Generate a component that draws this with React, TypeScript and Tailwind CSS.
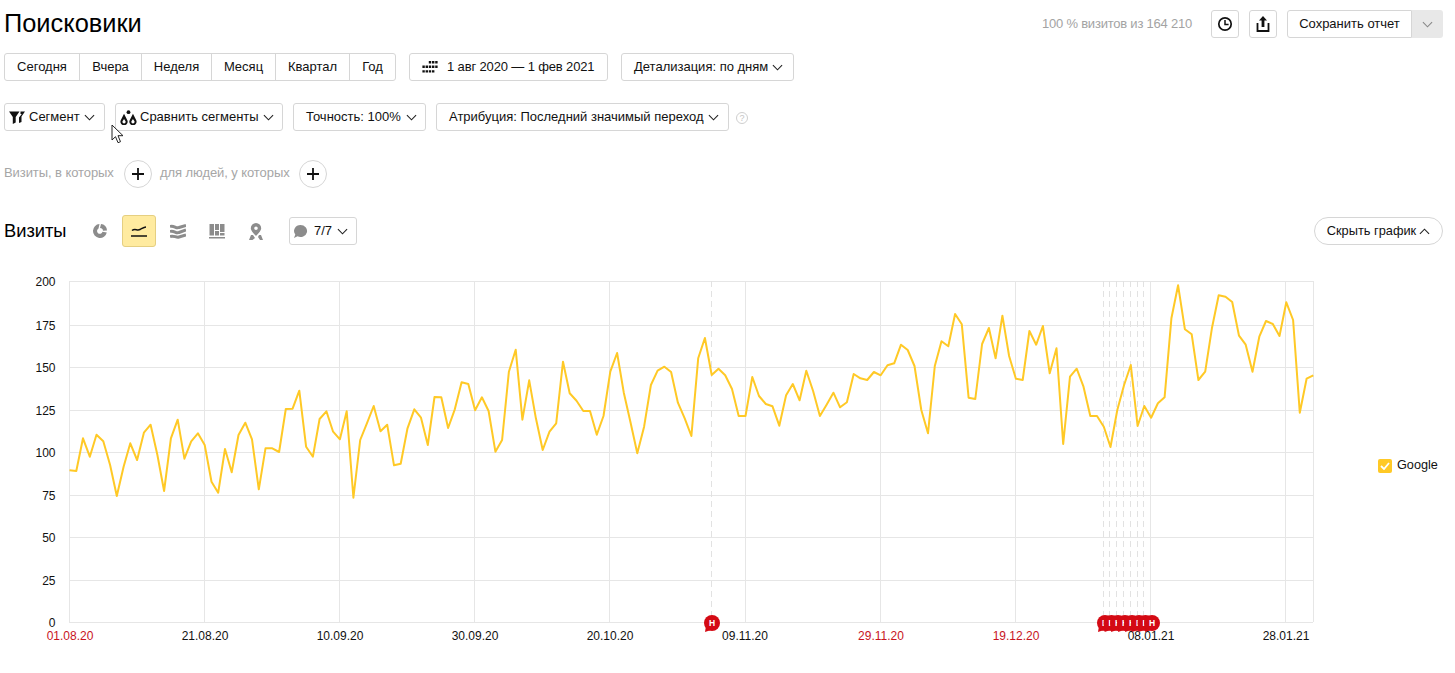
const raw = [601,603,505,560,494,514,585,678,590,520,570,488,464,555,663,505,449,566,514,490,525,635,668,537,607,495,458,508,658,535,535,546,417,416,362,530,560,447,424,485,508,424,683,510,460,408,484,464,586,581,475,418,443,525,381,382,474,418,337,342,421,382,423,545,510,305,239,449,331,445,540,485,460,275,370,392,423,423,494,438,305,249,368,458,550,470,345,302,290,306,398,445,498,265,204,315,296,316,357,438,438,321,378,402,409,467,376,342,391,302,363,438,404,368,412,397,312,325,330,306,316,286,280,224,240,288,420,490,288,214,229,132,163,383,387,222,174,265,137,258,326,330,183,224,168,310,235,522,320,296,350,438,438,470,531,420,345,285,468,408,443,400,382,145,46,178,193,330,305,175,76,80,96,197,224,305,200,153,162,198,97,150,428,326,316];
const points = raw.map((v, i) => `${(69.5 + i * 6.76).toFixed(1)},${(v / 3).toFixed(1)}`).join(" ");
const hLines = [[200, 11], [175, 55], [150, 97], [125, 140], [100, 182], [75, 225], [50, 267], [25, 310], [0, 352]];
const vLines = [69.5, 204.5, 339.5, 474.5, 609.5, 745.5, 880.5, 1015.5, 1150.5, 1285.5, 1313.5];
const dashed = [711.5, 1103.5, 1109.5, 1116.5, 1123.5, 1130.5, 1137.5, 1143.5];
const xLabels: [string, number, boolean][] = [["01.08.20", 70, true], ["21.08.20", 205, false], ["10.09.20", 340, false], ["30.09.20", 475, false], ["20.10.20", 610, false], ["09.11.20", 745, false], ["29.11.20", 881, true], ["19.12.20", 1016, true], ["08.01.21", 1151, false], ["28.01.21", 1286, false]];
const tagXs = [1105, 1111.5, 1118, 1125, 1132, 1139, 1145.5, 1152];

function Chevron({ up = false, color = "#222" }: { up?: boolean; color?: string }) {
  return (
    <svg width="11" height="7" viewBox="0 0 12 7" fill="none" className="shrink-0">
      <path d={up ? "M1 6L6 1L11 6" : "M1 1L6 6L11 1"} stroke={color} strokeWidth="1.2" />
    </svg>
  );
}

function Btn({ className = "", children }: { className?: string; children: React.ReactNode }) {
  return (
    <div className={`flex h-[28px] items-center rounded-[3px] border border-[#d6d6d6] bg-white text-[13px] whitespace-nowrap text-[#111] ${className}`}>
      {children}
    </div>
  );
}

function Tag({ x }: { x: number }) {
  return (
    <g>
      <path d={`M${x - 6} 6L${x - 7} 12L${x - 1} 10Z`} fill="#d40a14" />
      <circle cx={x} cy={3} r={8} fill="#d40a14" />
      <text x={x} y={6} textAnchor="middle" fontSize="8.500" fontWeight="700" fill="#fff" fontFamily="'Liberation Sans', sans-serif">Н</text>
    </g>
  );
}

export default function App() {
  return (
    <div className="relative flex h-[673px] w-[1455px] flex-col overflow-hidden bg-white font-['Liberation_Sans',Arial,sans-serif] text-[#111]">
      <div className="flex h-[53px] items-start pr-[12px] pl-[4px]">
        <h1 className="mt-[7px] text-[25.400px] leading-[32px] font-normal text-black">Поисковики</h1>
        <div className="mt-[10px] ml-auto flex items-center">
          <span className="mr-[19px] pb-[1px] text-[13px] tracking-[-0.22px] text-[#a3a3a3]">100 % визитов из 164 210</span>
          <Btn className="mr-[10px] w-[28px] justify-center">
            <svg width="16" height="16" viewBox="0 0 16 16" fill="none">
              <circle cx="8" cy="8" r="6.200" stroke="#111" strokeWidth="1.700" />
              <path d="M8 4v4.400h3.600" stroke="#111" strokeWidth="1.500" />
            </svg>
          </Btn>
          <Btn className="mr-[10px] w-[28px] justify-center">
            <svg width="14" height="18" viewBox="0 0 14 18" fill="none">
              <path d="M7 1L3 5.500h2.600V12h2.800V5.500H11z" fill="#111" />
              <path d="M1.500 8v8h11V8" stroke="#111" strokeWidth="1.800" fill="none" />
            </svg>
          </Btn>
          <Btn className="w-[125px] justify-center rounded-r-none">Сохранить отчет</Btn>
          <div className="flex h-[28px] w-[31px] items-center justify-center rounded-r-[3px] bg-[#e8e8e8]">
            <Chevron color="#888" />
          </div>
        </div>
      </div>

      <div className="flex h-[28px] pl-[4px]">
        <div className="flex h-[28px] rounded-[3px] border border-[#d6d6d6] text-[13px] whitespace-nowrap">
          <div className="flex w-[75px] items-center justify-center border-r border-[#d6d6d6]">Сегодня</div>
          <div className="flex w-[62px] items-center justify-center border-r border-[#d6d6d6]">Вчера</div>
          <div className="flex w-[70px] items-center justify-center border-r border-[#d6d6d6]">Неделя</div>
          <div className="flex w-[64px] items-center justify-center border-r border-[#d6d6d6]">Месяц</div>
          <div className="flex w-[74px] items-center justify-center border-r border-[#d6d6d6]">Квартал</div>
          <div className="flex w-[45px] items-center justify-center">Год</div>
        </div>
        <Btn className="ml-[13px] w-[199px] pl-[12px]">
          <svg width="16" height="12" viewBox="0 0 16 12" fill="#111" className="mr-[9px]">
            <path d="M6.800 0h2.400v2.400H6.800zM10 0h2.400v2.400H10zM13.200 0h2.400v2.400h-2.400zM0.400 4.600h2.400v2.400H0.400zM3.600 4.600h2.400v2.400H3.600zM6.800 4.600h2.400v2.400H6.800zM10 4.600h2.400v2.400H10zM13.200 4.600h2.400v2.400h-2.400zM0.400 9.200h2.400v2.400H0.400zM3.600 9.200h2.400v2.400H3.600zM6.800 9.200h2.400v2.400H6.800zM10 9.200h2.400v2.400H10z" />
          </svg>
          <span className="tracking-[-0.14px]">1 авг 2020 — 1 фев 2021</span>
        </Btn>
        <Btn className="ml-[13px] w-[173px] pl-[12px]">
          <span className="mr-[4px]">Детализация: по дням</span>
          <Chevron />
        </Btn>
      </div>

      <div className="mt-[22px] flex h-[28px] items-center pl-[4px]">
        <Btn className="w-[101px] pl-[4px]">
          <svg width="16" height="13" viewBox="0 0 16 13" fill="#111" className="mr-[4px]">
            <path d="M0 0.500h10.500L6.700 6v5.500L3.800 13V6zM11.500 0.500H16l-3.500 5V11L10 12V6.500L12.800 3H11.500z" />
          </svg>
          <span className="mr-[4px]">Сегмент</span>
          <Chevron />
        </Btn>
        <Btn className="ml-[10px] w-[168px] pl-[4px]">
          <svg width="17" height="15" viewBox="0 0 16 14" fill="#111" className="mr-[3px]">
            <path fillRule="evenodd" d="M3.800 3.500L7 9.800A3.400 3.400 0 1 1 0.600 9.800ZM3.800 8.500L2.400 10.500A1.500 1.500 0 1 0 5.200 10.500Z" />
            <circle cx="8" cy="2" r="1.800" />
            <path fillRule="evenodd" d="M12.200 3.500L15.400 9.800A3.400 3.400 0 1 1 9 9.800ZM12.200 8.500L10.800 10.500A1.500 1.500 0 1 0 13.600 10.500Z" />
          </svg>
          <span className="mr-[4px]">Сравнить сегменты</span>
          <Chevron />
        </Btn>
        <Btn className="ml-[10px] w-[133px] pl-[12px]">
          <span className="mr-[5px]">Точность: 100%</span>
          <Chevron />
        </Btn>
        <Btn className="ml-[10px] w-[293px] pl-[12px]">
          <span className="mr-[4px]">Атрибуция: Последний значимый переход</span>
          <Chevron />
        </Btn>
        <div className="mt-[2px] ml-[7px] flex h-[12px] w-[12px] items-center justify-center rounded-full border border-[#cfcfcf] text-[9px] leading-none text-[#c4c4c4]">?</div>
      </div>

      <div className="mt-[29px] flex h-[28px] items-center pl-[4px] text-[13px] tracking-[-0.08px] text-[#a6a6a6]">
        <span className="w-[120px] shrink-0 pb-[2px] whitespace-nowrap">Визиты, в которых</span>
        <div className="flex h-[28px] w-[28px] items-center justify-center rounded-full border border-[#d6d6d6]">
          <svg width="12" height="12" viewBox="0 0 12 12"><path d="M6 0v12M0 6h12" stroke="#111" strokeWidth="1.800" /></svg>
        </div>
        <span className="ml-[8px] w-[139px] shrink-0 pb-[2px] whitespace-nowrap">для людей, у которых</span>
        <div className="flex h-[28px] w-[28px] items-center justify-center rounded-full border border-[#d6d6d6]">
          <svg width="12" height="12" viewBox="0 0 12 12"><path d="M6 0v12M0 6h12" stroke="#111" strokeWidth="1.800" /></svg>
        </div>
      </div>

      <div className="mt-[27px] flex h-[32px] items-center pr-[12px] pl-[4px]">
        <span className="w-[88px] text-[18.300px] text-black">Визиты</span>
        <svg width="16" height="16" viewBox="0 0 16 16" fill="#8c8c8c" className="mr-[14px]">
          <path fillRule="evenodd" d="M7.500 1A7 7 0 1 0 14.800 9.500L10.500 8.800A2.800 2.800 0 1 1 6.500 5.500Z" />
          <path d="M9 1a6.500 6.500 0 0 1 6 6.500l-4 .2A3 3 0 0 0 8 5Z" />
        </svg>
        <div className="flex h-[32px] w-[34px] items-center justify-center rounded-[3px] border border-[#e5cf81] bg-[#ffeba0]">
          <svg width="16" height="12" viewBox="0 0 16 12" fill="none" stroke="#111" strokeWidth="1.500">
            <path d="M1 5.500C4 3 6 6 9 4.500C11 3.500 13 2 15 2" />
            <path d="M0 11h16" />
          </svg>
        </div>
        <svg width="16" height="15" viewBox="0 0 16 15" fill="none" stroke="#8c8c8c" strokeWidth="3" className="ml-[14px]">
          <path d="M0 2.500C4 1 6 5 9 3.500L16 1.500" />
          <path d="M0 7.500C4 6 6 10 9 8.500L16 6" />
          <path d="M0 12.500C4 11 6 14 9 13L16 11" />
        </svg>
        <svg width="16" height="15" viewBox="0 0 16 15" fill="#8c8c8c" className="ml-[23px]">
          <path d="M0.500 0h4.500v11.500H0.500zM6 0h4v6H6zM6 7h4v4.500H6zM11 0h4.500v8H11zM11 9h4.500v2.500H11zM0 13h16v1.500H0z" />
        </svg>
        <svg width="16" height="17" viewBox="0 0 16 17" fill="#8c8c8c" className="ml-[23px]">
          <path fillRule="evenodd" d="M8 0a5.200 5.200 0 0 1 5.200 5.200C13.200 8 9.500 11 8 13C6.500 11 2.800 8 2.800 5.200A5.200 5.200 0 0 1 8 0ZM8 3.500a1.800 1.800 0 1 0 0 3.600a1.800 1.800 0 0 0 0-3.600Z" />
          <path d="M3 12l2 0l2 3l-2.500 2H1ZM13 12l-2 0l-1 2l2 3h3Z" />
        </svg>
        <Btn className="ml-[25px] w-[68px] pl-[3px]">
          <svg width="15" height="15" viewBox="0 0 15 15" fill="#8c8c8c" className="mr-[6px]">
            <path d="M7.500 1a6.500 6 0 1 1-3 11.300L1 14l1.300-3.500A6.500 6 0 0 1 7.500 1Z" />
          </svg>
          <span className="mr-[5px]">7/7</span>
          <Chevron />
        </Btn>
        <div className="ml-auto flex h-[28px] w-[129px] items-center justify-center gap-[3px] rounded-full border border-[#d6d6d6] text-[12.800px] whitespace-nowrap">
          Скрыть график
          <Chevron up />
        </div>
      </div>

      <div className="mt-[23px] flex items-start">
        <svg width="1330" height="380" viewBox="0 270 1330 380" className="shrink-0" fontFamily="'Liberation Sans', sans-serif">
          {hLines.map(([v, y]) => (
            <g key={v}>
              <line x1="69" x2="1313" y1={y + 270.5} y2={y + 270.5} stroke="#e6e6e6" />
              <text x="55.500" y={y + 275} textAnchor="end" fontSize="12" fill="#111">{v}</text>
            </g>
          ))}
          {vLines.map((x) => (
            <line key={x} x1={x} x2={x} y1="281" y2="622" stroke="#e6e6e6" />
          ))}
          {dashed.map((x) => (
            <line key={x} x1={x} x2={x} y1="281" y2="622" stroke="#e2e2e2" strokeDasharray="6 4" />
          ))}
          <polyline transform="translate(0 270)" points={points} fill="none" stroke="#ffc926" strokeWidth="2" strokeLinejoin="round" />
          {xLabels.map(([t, x, red]) => (
            <text key={t} x={x} y="640" textAnchor="middle" fontSize="12" fill={red ? "#c8141e" : "#111"}>{t}</text>
          ))}
          <g transform="translate(0 620)">
            <Tag x={712} />
            {tagXs.map((x) => <Tag key={x} x={x} />)}
          </g>
        </svg>
        <div className="mt-[186px] ml-[48px] flex items-center text-[12.700px] text-[#111]">
          <div className="mr-[5px] flex h-[14px] w-[14px] items-center justify-center rounded-[2px] bg-[#ffc926]">
            <svg width="10" height="8" viewBox="0 0 10 8" fill="none"><path d="M1 4l3 3 5-6" stroke="#fff" strokeWidth="1.800" /></svg>
          </div>
          Google
        </div>
      </div>

      <svg width="14" height="21" viewBox="0 0 14 21" className="absolute top-[124px] left-[111px]">
        <path d="M1 1v15l3.500-3.300 2.500 6 2.500-1-2.500-6h5z" fill="#fff" stroke="#222" strokeWidth="1" />
      </svg>
    </div>
  );
}
